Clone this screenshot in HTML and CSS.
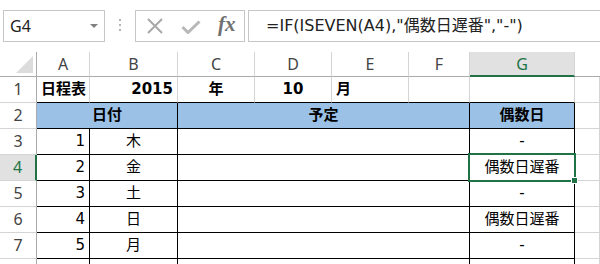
FILE: index.html
```html
<!DOCTYPE html>
<html>
    <head>
        <meta charset="utf-8">
        <link rel="stylesheet" href="styles.css">
    </head>
<body>
    <div class="toolbar">
        <div class="namebox"><span>G4</span><span class="caret"></span></div>
        <div class="grip">
            <svg width="3" height="14" viewBox="0 0 3 14"><rect x="0" y="0" width="2" height="2" fill="#b4b4b4"/><rect x="0" y="5" width="2" height="2" fill="#b4b4b4"/><rect x="0" y="10" width="2" height="2" fill="#b4b4b4"/></svg>
        </div>
        <div class="fxbox">
            <svg class="ico-x" width="18" height="18" viewBox="0 0 18 18"><path d="M2 2 L16 16 M16 2 L2 16" stroke="#a8a8a8" stroke-width="2" fill="none"/></svg>
            <svg class="ico-ok" width="20" height="14" viewBox="0 0 20 14"><path d="M1.5 7 L7 12.5 L18.5 1.5" stroke="#b8b8b8" stroke-width="3" fill="none"/></svg>
            <span class="fx">fx</span>
        </div>
        <div class="formula">=IF(ISEVEN(A4),"偶数日遅番","-")</div>
    </div>

    <div class="sheet">
        <!-- column headers -->
        <div class="corner"><span class="tri"></span></div>
        <div class="ch">A</div>
        <div class="ch">B</div>
        <div class="ch">C</div>
        <div class="ch">D</div>
        <div class="ch">E</div>
        <div class="ch">F</div>
        <div class="ch on">G</div>
        <div class="ch last"></div>

        <!-- 1 -->
        <div class="rh">1</div>
        <div class="top bold">日程表</div>
        <div class="top bold right">2015</div>
        <div class="top bold center">年</div>
        <div class="top bold center">10</div>
        <div class="top bold">月</div>
        <div class="top"></div>
        <div class="top"></div>
        <div></div>

        <!-- 2 -->
        <div class="rh">2</div>
        <div class="b head center span2">日付</div>
        <div class="b head center span4">予定</div>
        <div class="b head center">偶数日</div>
        <div></div>

        <!-- 3 -->
        <div class="rh">3</div>
        <div class="b right">1</div>
        <div class="b center">木</div>
        <div class="b span4"></div>
        <div class="b center">-</div>
        <div></div>

        <!-- 4 -->
        <div class="rh on">4</div>
        <div class="b right">2</div>
        <div class="b center">金</div>
        <div class="b span4"></div>
        <div class="b center sel">偶数日遅番</div>
        <div></div>

        <!-- 5 -->
        <div class="rh">5</div>
        <div class="b right">3</div>
        <div class="b center">土</div>
        <div class="b span4"></div>
        <div class="b center">-</div>
        <div></div>

        <!-- 6 -->
        <div class="rh">6</div>
        <div class="b right">4</div>
        <div class="b center">日</div>
        <div class="b span4"></div>
        <div class="b center">偶数日遅番</div>
        <div></div>

        <!-- 7 -->
        <div class="rh">7</div>
        <div class="b right">5</div>
        <div class="b center">月</div>
        <div class="b span4"></div>
        <div class="b center">-</div>
        <div></div>

        <!-- 8 (only the top edge is in view) -->
        <div class="rh"></div>
        <div class="b"></div>
        <div class="b"></div>
        <div class="b span4"></div>
        <div class="b"></div>
        <div></div>
    </div>
</body>
</html>
```

FILE: styles.css
```css
body {
    margin: 0;
    background: #fff;
    overflow: hidden;
    font-family: "DejaVu Sans", "Noto Sans CJK JP", sans-serif;
    color: #000;
}

/* formula bar */
.toolbar {
    display: flex;
    height: 52px;
    padding-top: 10px;
    box-sizing: border-box;
}

.namebox {
    margin-left: 3px;
    width: 102px;
    height: 32px;
    box-sizing: border-box;
    border: 1px solid #c6c6c6;
    display: flex;
    align-items: center;
    justify-content: space-between;
    padding: 0 6px 0 6px;
    font: 16px "Noto Sans", sans-serif;
    color: #222;
}

.caret {
    width: 0;
    height: 0;
    border-left: 4px solid transparent;
    border-right: 4px solid transparent;
    border-top: 4px solid #808080;
}

.grip {
    width: 30px;
    display: flex;
    justify-content: center;
    align-items: center;
    height: 32px;
}

.fxbox {
    width: 110px;
    height: 32px;
    box-sizing: border-box;
    border: 1px solid #c6c6c6;
    display: flex;
    align-items: center;
}

.ico-x {
    margin-left: 10px;
}

.ico-ok {
    margin-left: 17px;
    margin-top: 2px;
}

.fx {
    margin-left: 17px;
    font: italic bold 21px "Liberation Serif", serif;
    color: #707070;
    margin-top: -3px;
}

.formula {
    margin-left: 3px;
    flex: 1;
    height: 32px;
    box-sizing: border-box;
    border: 1px solid #c6c6c6;
    border-right: none;
    padding-left: 17px;
    line-height: 29px;
    font-size: 16px;
    color: #222;
    white-space: nowrap;
}

/* sheet */
.sheet {
    display: grid;
    grid-template-columns: 37px 53px 88px 77px 77px 77px 61px 105px 1fr;
    grid-template-rows: 25px repeat(8, 26px);
}

.sheet > div {
    box-sizing: border-box;
    border-right: 1px solid #d4d4d4;
    border-bottom: 1px solid #d4d4d4;
    font-size: 15px;
    line-height: 25px;
    padding: 0 4px;
    white-space: nowrap;
}

.sheet > .corner {
    position: relative;
    border-right-color: #ababab;
    border-bottom-color: #ababab;
}

.tri {
    position: absolute;
    right: 3px;
    bottom: 3px;
    width: 0;
    height: 0;
    border-left: 17px solid transparent;
    border-bottom: 17px solid #dcdcdc;
}

.sheet > .ch {
    text-align: center;
    font-family: "Noto Sans", sans-serif;
    font-size: 16px;
    line-height: 24px;
    color: #444;
    border-bottom-color: #ababab;
}

.sheet > .ch.on {
    background: #e1e1e1;
    color: #217346;
    border-bottom: 2px solid #217346;
}

.sheet > .ch.last {
    border-right: none;
}

.sheet > .rh {
    text-align: center;
    font-family: "Noto Sans", sans-serif;
    font-size: 16px;
    color: #444;
    border-right-color: #ababab;
}

.sheet > .rh.on {
    background: #e1e1e1;
    color: #217346;
    border-right: 2px solid #217346;
}

.sheet > .top {
    border-bottom-color: #000;
}

.sheet > .b {
    border-right-color: #000;
    border-bottom-color: #000;
}

.head {
    background: #9bc2e6;
    font-weight: bold;
}

.bold {
    font-weight: bold;
}

.right {
    text-align: right;
}

.center {
    text-align: center;
}

.span2 {
    grid-column: span 2;
}

.span4 {
    grid-column: span 4;
}

.sel {
    position: relative;
}

.sel::before {
    content: "";
    position: absolute;
    left: -2px;
    top: -2px;
    right: -2px;
    bottom: -2px;
    border: 2px solid #217346;
    z-index: 1;
}

.sel::after {
    content: "";
    position: absolute;
    right: -4px;
    bottom: -4px;
    width: 5px;
    height: 5px;
    background: #217346;
    border: 1px solid #fff;
    z-index: 2;
}
```
